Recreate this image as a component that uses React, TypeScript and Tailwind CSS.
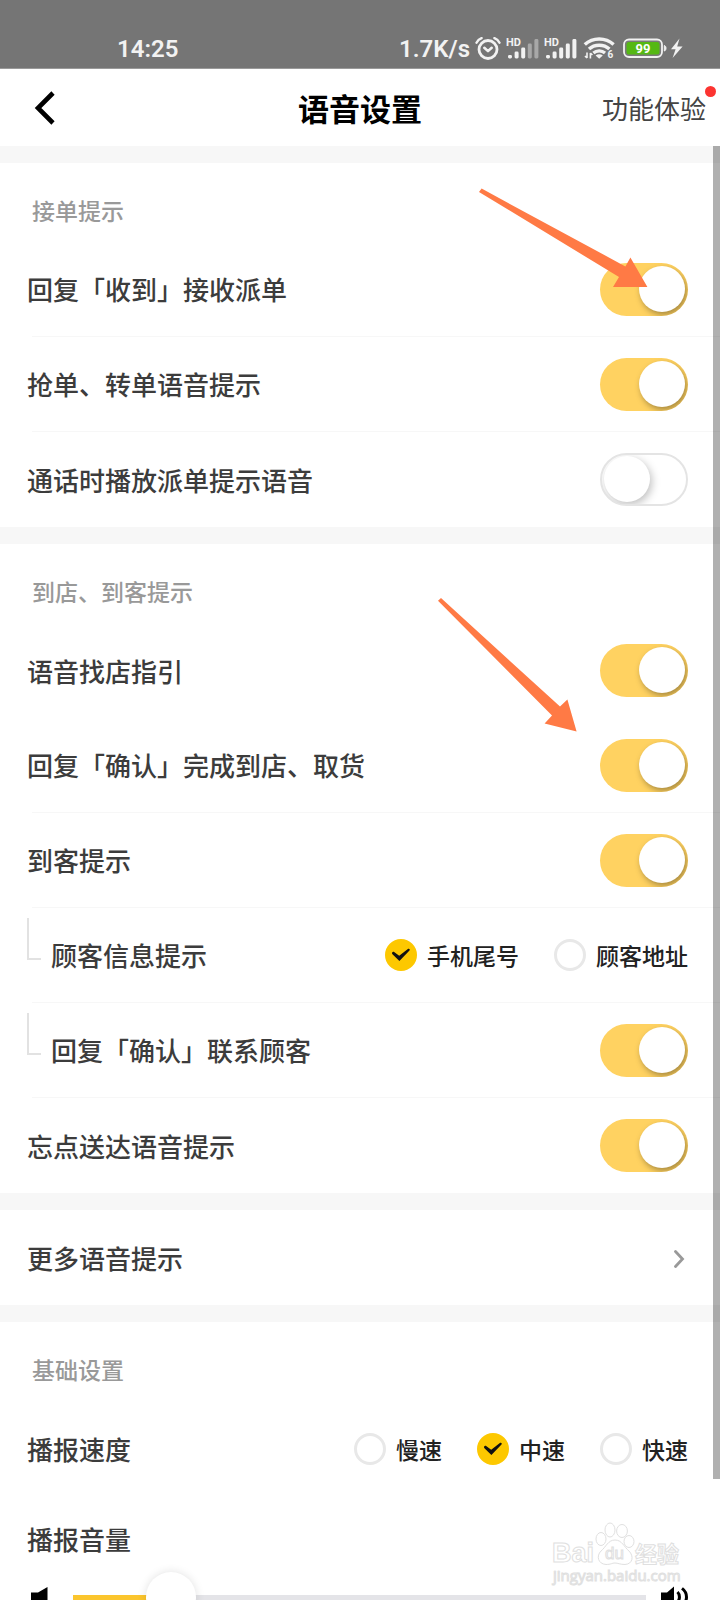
import { useState } from "react";
import type { ReactNode } from "react";

// ─── Status bar icons ──────────────────────────────────────────────────────

function AlarmIcon() {
  return (
    <svg className="h-6 w-[26px]" viewBox="0 0 26 24" fill="none" stroke="#f2f2f2" strokeLinecap="round" aria-hidden="true">
      <circle cx="13" cy="12.5" r="9" strokeWidth="2.8" />
      <path d="M1.5 5.7C2.6 3.5 4.4 1.9 6.6 1.1M24.5 5.7C23.4 3.5 21.6 1.9 19.4 1.1" strokeWidth="2.4" />
      <path d="M9.3 10.8L13 14.1L16.7 10.8" strokeWidth="2.6" strokeLinejoin="round" />
    </svg>
  );
}

// bars: how many of the five bars are lit
function SignalIcon({ bars }: { bars: number }) {
  const tops = [18, 14.5, 10.500, 6.5, 2];
  return (
    <svg className="h-6 w-[33px]" viewBox="0 0 33 24" aria-hidden="true">
      {tops.map((y, i) => (
        <rect
          key={y}
          x={2 + i * 6.6}
          y={y}
          width="4"
          height={21.5 - y}
          rx="1.4"
          fill={i < bars ? "#f2f2f2" : "#a8a8a8"}
        />
      ))}
      <text x="0" y="9" fill="#f2f2f2" fontSize="11" fontWeight="700" fontFamily="Roboto, sans-serif">
        HD
      </text>
    </svg>
  );
}

function WifiIcon() {
  return (
    <svg className="h-6 w-[33px]" viewBox="0 0 33 24" fill="none" stroke="#f2f2f2" aria-hidden="true">
      <path d="M2.8 7.6C10.800 0.2 23.6 0.2 31.6 7.6" strokeWidth="3.4" />
      <path d="M7 12C12.500 6.9 21.9 6.9 27.4 12" strokeWidth="3.4" />
      <path d="M11.4 16C14.600 13.1 19.8 13.1 23 16" strokeWidth="3.2" />
      <path d="M13.6 18.4C15.6 16.7 18.8 16.7 20.8 18.4L17.2 21.8Z" fill="#f2f2f2" stroke="none" />
      <path d="M5 15.5V21M5 21L3 19M8.4 21.5V16M8.4 16L10.4 18" strokeWidth="1.6" />
      <text x="25.5" y="21" fill="#f2f2f2" stroke="none" fontSize="10" fontWeight="700" fontFamily="Roboto, sans-serif">
        6
      </text>
    </svg>
  );
}

function BatteryIcon() {
  return (
    <svg className="h-6 w-16" viewBox="0 0 64 24" aria-hidden="true">
      <rect x="4" y="2.5" width="38" height="17.5" rx="5" fill="#7a7a7a" stroke="#f2f2f2" strokeWidth="1.8" />
      <rect x="6.5" y="5" width="33" height="12.5" rx="2.5" fill="#55b814" />
      <path d="M44.3 8.5C46.6 9 46.6 13.5 44.3 14Z" fill="#f2f2f2" stroke="#f2f2f2" strokeLinejoin="round" />
      <text x="23" y="16" textAnchor="middle" fill="#fff" fontSize="13" fontWeight="700" fontFamily="Roboto, sans-serif">
        99
      </text>
      <path d="M59.5 1.5L51 12.2H55.6L52.6 21L62.6 9.6H57.2Z" fill="#f2f2f2" />
    </svg>
  );
}

function StatusBar() {
  return (
    <div className="flex h-[69px] shrink-0 items-end justify-between border-b border-[#9a9a9a] bg-[#757575] pr-9 pb-[7px] pl-[117px] font-[Roboto,sans-serif] text-2xl leading-6 font-semibold text-[#f2f2f2]">
      <span>14:25</span>
      <div className="flex items-center gap-[5px]">
        <span>1.7K/s</span>
        <AlarmIcon />
        <SignalIcon bars={3} />
        <SignalIcon bars={5} />
        <WifiIcon />
        <BatteryIcon />
      </div>
    </div>
  );
}

// ─── Form controls ─────────────────────────────────────────────────────────

function Toggle({ id, defaultOn }: { id: string; defaultOn: boolean }) {
  const [on, setOn] = useState(defaultOn);
  return (
    <input
      id={id}
      type="checkbox"
      role="switch"
      checked={on}
      onChange={(e) => setOn(e.target.checked)}
      className={`h-[53px] w-[88px] shrink-0 appearance-none overflow-hidden rounded-full before:block before:size-[46px] before:rounded-full before:bg-white before:content-[''] ${
        on
          ? "bg-[#ffd261] p-[3px] before:ml-9 before:shadow-[2px_3px_6px_rgba(0,0,0,0.35)]"
          : "border-2 border-[#e4e4e4] bg-white p-px before:ml-px before:shadow-[2px_3px_8px_rgba(0,0,0,0.25)]"
      }`}
    />
  );
}

function RadioGroup({ name, options, initial }: { name: string; options: string[]; initial: string }) {
  const [value, setValue] = useState(initial);
  return (
    <div className="flex gap-[35px]" role="radiogroup" aria-label={name}>
      {options.map((opt) => (
        <label key={opt} className="flex items-center gap-2.5 text-[23px] leading-8 font-medium text-[#222]">
          <span className="relative size-8">
            <input
              type="radio"
              name={name}
              checked={value === opt}
              onChange={() => setValue(opt)}
              className="block size-8 appearance-none rounded-full border-[3px] border-[#e8e8e8] bg-white checked:border-[#fdc800] checked:bg-[#fdc800]"
            />
            {value === opt && (
              <svg className="pointer-events-none absolute inset-0 size-8" viewBox="0 0 32 32" aria-hidden="true">
                <path
                  d="M8.8 12.8L14.2 16.8L23.2 9.8C24.4 9.4 25.2 10.400 24.5 11.5L14.4 22L7.2 15C6.6 13.4 7.6 12.4 8.8 12.8Z"
                  fill="#111"
                />
              </svg>
            )}
          </span>
          {opt}
        </label>
      ))}
    </div>
  );
}

// ─── List building blocks ──────────────────────────────────────────────────

interface RowProps {
  label: string;
  htmlFor?: string;
  sub?: boolean;
  divider?: boolean;
  children?: ReactNode;
}

function Row({ label, htmlFor, sub, divider, children }: RowProps) {
  return (
    <li className="flex h-[95px] flex-col">
      <div className="flex flex-1 items-center pr-8 pl-[27px]">
        {sub && <span className="mt-2.5 mr-2.5 h-[42px] w-3.5 self-start border-b-2 border-l-2 border-[#e2e2e2]" />}
        <label htmlFor={htmlFor} className="flex-1 text-[26px] leading-9 font-medium text-[#3c3c3c]">
          {label}
        </label>
        {children}
      </div>
      {divider && <hr className="ml-8 border-[#f7f7f7]" />}
    </li>
  );
}

function SectionTitle({ children }: { children: ReactNode }) {
  return (
    <h2 className="flex h-[79px] items-center pt-3.5 pl-8 text-[23px] leading-8 font-medium text-[#999]">{children}</h2>
  );
}

function ToggleRow({ id, label, on = true, sub, divider }: { id: string; label: string; on?: boolean; sub?: boolean; divider?: boolean }) {
  return (
    <Row label={label} htmlFor={id} sub={sub} divider={divider}>
      <Toggle id={id} defaultOn={on} />
    </Row>
  );
}

function VolumeSlider() {
  const [volume, setVolume] = useState(14);
  return (
    <div className="flex items-center px-[31px]">
      <svg className="h-6 w-[18px] shrink-0" viewBox="0 0 18 24" aria-hidden="true">
        <path d="M0 7.5H7L16.5 2V22L7 16.500H0Z" fill="#000" />
      </svg>
      <input
        id="volume"
        type="range"
        min={0}
        max={100}
        value={volume}
        onChange={(e) => setVolume(Number(e.target.value))}
        style={{ backgroundImage: `linear-gradient(to right, #fbc52d ${volume}%, #e4e4e8 ${volume}%)` }}
        className="mr-[15px] ml-6 h-[52px] min-w-0 flex-1 appearance-none rounded-sm bg-[length:100%_5px] bg-center bg-no-repeat [&::-webkit-slider-thumb]:size-[50px] [&::-webkit-slider-thumb]:appearance-none [&::-webkit-slider-thumb]:rounded-full [&::-webkit-slider-thumb]:bg-white [&::-webkit-slider-thumb]:shadow-[0_0_10px_rgba(0,0,0,0.12)]"
      />
      <svg className="h-6 w-7 shrink-0" viewBox="0 0 28 24" fill="none" stroke="#000" strokeWidth="3" aria-hidden="true">
        <path d="M0 7.5H6L13 1.5V22.5L6 16.5H0Z" fill="#000" stroke="none" />
        <path d="M16.5 7C19.1 9.6 19.1 14.4 16.5 17M21 3.4C27 8 27 16 21 20.6" />
      </svg>
    </div>
  );
}

// ─── Overlays: guide arrows and site mark ──────────────────────────────────

function GuideArrows() {
  return (
    <>
      <svg className="pointer-events-none absolute top-[39px] right-[71px] h-[110px] w-[180px]" viewBox="0 0 180 110" aria-hidden="true">
        <path d="M10 7L12.6 3.6L156.4 81.4L161.4 72.6L178.4 102H144L150 92Z" fill="#ff7a45" />
      </svg>
      <svg className="pointer-events-none absolute top-[449px] right-[140px] h-[140px] w-[145px]" viewBox="0 0 145 140" aria-hidden="true">
        <path d="M3 5.7L6 3L125 111.6L132.4 104.4L141.6 136.6L109.6 128.4L117 120.6Z" fill="#ff7a45" />
      </svg>
    </>
  );
}

function SiteMark() {
  return (
    <svg
      className="pointer-events-none absolute top-[1374px] right-9 h-[66px] w-[134px]"
      viewBox="0 0 134 66"
      fill="#fff"
      stroke="#e0e0e0"
      strokeWidth="1"
      fontFamily="'Liberation Sans', 'Noto Sans CJK SC', sans-serif"
      aria-hidden="true"
    >
      <text x="2" y="42" fontSize="27" fontWeight="700">Bai</text>
      <ellipse cx="51" cy="19" rx="5" ry="6.5" />
      <ellipse cx="60" cy="10" rx="5" ry="7" />
      <ellipse cx="72" cy="11" rx="5.4" ry="6.5" />
      <ellipse cx="79" cy="21.5" rx="5" ry="6" />
      <path d="M65 20C58 20 56 27 51 31C46 36 48 44 56 44.5C61 44.5 62 43 65 43C68 43 70 44.5 75 44.5C83 44 84 36 79 31C74 27 72 20 65 20Z" />
      <text x="55" y="39" fontSize="17">du</text>
      <text x="85" y="42" fontSize="22" fontWeight="700">经验</text>
      <text x="3" y="61" fontSize="15" fontFamily="'Open Sans', sans-serif">jingyan.baidu.com</text>
    </svg>
  );
}

// ─── Page ──────────────────────────────────────────────────────────────────

export default function App() {
  return (
    <div className="flex h-screen flex-col overflow-hidden bg-white font-['Noto_Sans_CJK_SC',sans-serif]">
      <StatusBar />

      <header className="grid h-[77px] shrink-0 grid-cols-[1fr_auto_1fr] items-center px-3.5">
        <button type="button" aria-label="返回" className="justify-self-start pl-5">
          <svg className="h-9 w-[22px]" viewBox="0 0 22 36" fill="none" stroke="#000" strokeWidth="4.600" aria-hidden="true">
            <path d="M19 3L4 18L19 33" />
          </svg>
        </button>
        <h1 className="text-[31px] leading-10 font-bold text-black">语音设置</h1>
        <a href="#trial" className="relative justify-self-end text-[26px] leading-9 text-[#444]">
          功能体验
          <span className="absolute -top-1 -right-2.5 size-[11px] rounded-full bg-[#fc3431]" />
        </a>
      </header>

      <main className="relative flex min-h-0 flex-1 flex-col overflow-hidden">
        <div className="flex flex-col gap-[17px] bg-[#f7f7f7] pt-[17px]">
          <section className="bg-white">
            <SectionTitle>接单提示</SectionTitle>
            <ul>
              <ToggleRow id="reply-accept" label="回复「收到」接收派单" divider />
              <ToggleRow id="grab-transfer" label="抢单、转单语音提示" divider />
              <ToggleRow id="in-call" label="通话时播放派单提示语音" on={false} />
            </ul>
          </section>

          <section className="bg-white">
            <SectionTitle>到店、到客提示</SectionTitle>
            <ul>
              <ToggleRow id="find-shop" label="语音找店指引" />
              <ToggleRow id="confirm-pickup" label="回复「确认」完成到店、取货" divider />
              <ToggleRow id="arrive-customer" label="到客提示" divider />
              <Row label="顾客信息提示" sub divider>
                <RadioGroup name="顾客信息提示" options={["手机尾号", "顾客地址"]} initial="手机尾号" />
              </Row>
              <ToggleRow id="confirm-contact" label="回复「确认」联系顾客" sub divider />
              <ToggleRow id="forgot-deliver" label="忘点送达语音提示" />
            </ul>
          </section>

          <section className="bg-white">
            <a href="#more" className="flex h-[95px] items-center justify-between pr-[35px] pl-[27px] text-[26px] leading-9 font-medium text-[#3c3c3c]">
              更多语音提示
              <svg className="h-5 w-3" viewBox="0 0 12 20" fill="none" stroke="#999" strokeWidth="2.8" aria-hidden="true">
                <path d="M2.5 3.5L9.5 11L2.5 18.5" strokeLinecap="round" />
              </svg>
            </a>
          </section>

          <section className="bg-white">
            <SectionTitle>基础设置</SectionTitle>
            <ul>
              <Row label="播报速度">
                <RadioGroup name="播报速度" options={["慢速", "中速", "快速"]} initial="中速" />
              </Row>
            </ul>
            <label htmlFor="volume" className="block pt-[25px] pb-3.5 pl-[27px] text-[26px] leading-9 font-medium text-[#3c3c3c]">
              播报音量
            </label>
            <VolumeSlider />
          </section>
        </div>

        <GuideArrows />
        <SiteMark />
        {/* overlay scroll thumb */}
        <div className="pointer-events-none absolute top-0 right-0 h-11/12 w-[7px] bg-black/31" />
      </main>
    </div>
  );
}
